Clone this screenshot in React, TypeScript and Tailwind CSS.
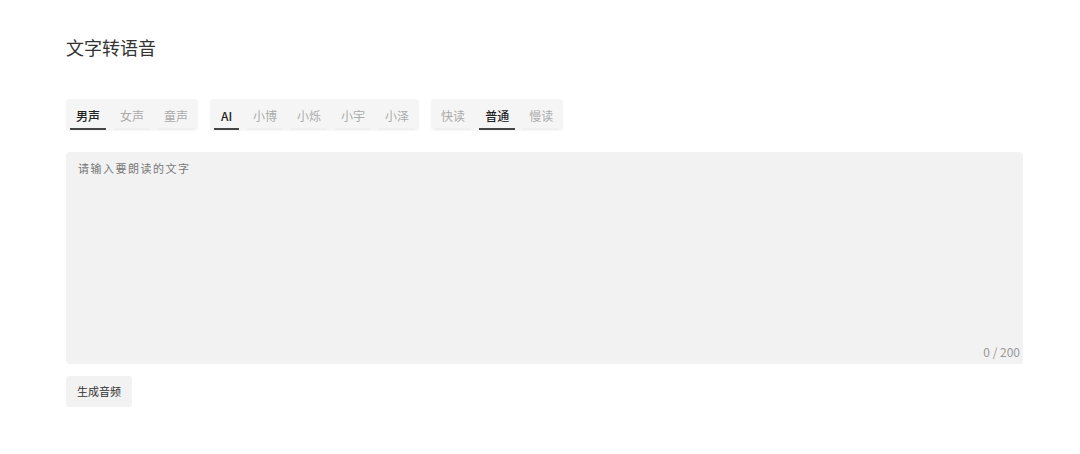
import { useState } from "react";

const genders = ["男声", "女声", "童声"];
const voices = ["AI", "小博", "小烁", "小宇", "小泽"];
const speeds = ["快读", "普通", "慢读"];

function TabGroup({
  items,
  active,
  onSelect,
}: {
  items: string[];
  active: string;
  onSelect: (v: string) => void;
}) {
  return (
    <div className="flex gap-[8px] rounded-[4px] bg-[#f5f5f5] px-[4px] pt-[4px] shadow-[0_1px_2px_rgba(0,0,0,0.04)]">
      {items.map((item) => {
        const on = item === active;
        return (
          <button
            key={item}
            onClick={() => onSelect(item)}
            className={
              on
                ? "h-[27px] min-w-[25px] border-b-2 border-[#444] px-[6px] text-[12px] font-medium leading-[25px] text-[#222]"
                : "h-[27px] min-w-[25px] border-b-2 border-[#f0f0f0] px-[6px] text-[12px] leading-[25px] text-[#aaa]"
            }
          >
            {item}
          </button>
        );
      })}
    </div>
  );
}

export default function App() {
  const [gender, setGender] = useState("男声");
  const [voice, setVoice] = useState("AI");
  const [speed, setSpeed] = useState("普通");
  const [text, setText] = useState("");

  return (
    <div
      className="min-h-[454px] bg-white pl-[66px] pr-[57px] pt-[34px]"
      style={{ fontFamily: '"Noto Sans CJK SC", "Noto Sans", sans-serif' }}
    >
      <h1 className="text-[18px] leading-[26px] text-[#333]">文字转语音</h1>

      <div className="mt-[39px] flex gap-[12px]">
        <TabGroup items={genders} active={gender} onSelect={setGender} />
        <TabGroup items={voices} active={voice} onSelect={setVoice} />
        <TabGroup items={speeds} active={speed} onSelect={setSpeed} />
      </div>

      <div className="relative mt-[22px] h-[212px] rounded-[4px] bg-[#f2f2f2]">
        <textarea
          value={text}
          maxLength={200}
          onChange={(e) => setText(e.target.value)}
          placeholder="请输入要朗读的文字"
          className="h-full w-full resize-none bg-transparent px-[12px] py-[8px] text-[11px] tracking-[1.5px] text-[#333] outline-none placeholder:text-[#777]"
        />
        <span className="absolute bottom-[3px] right-[3px] text-[12px] text-[#999]">
          {text.length} / 200
        </span>
      </div>

      <button className="mt-[12px] flex h-[31px] items-center rounded-[3px] bg-[#f2f2f2] px-[11px] text-[11px] text-[#333]">
        生成音频
      </button>
    </div>
  );
}
